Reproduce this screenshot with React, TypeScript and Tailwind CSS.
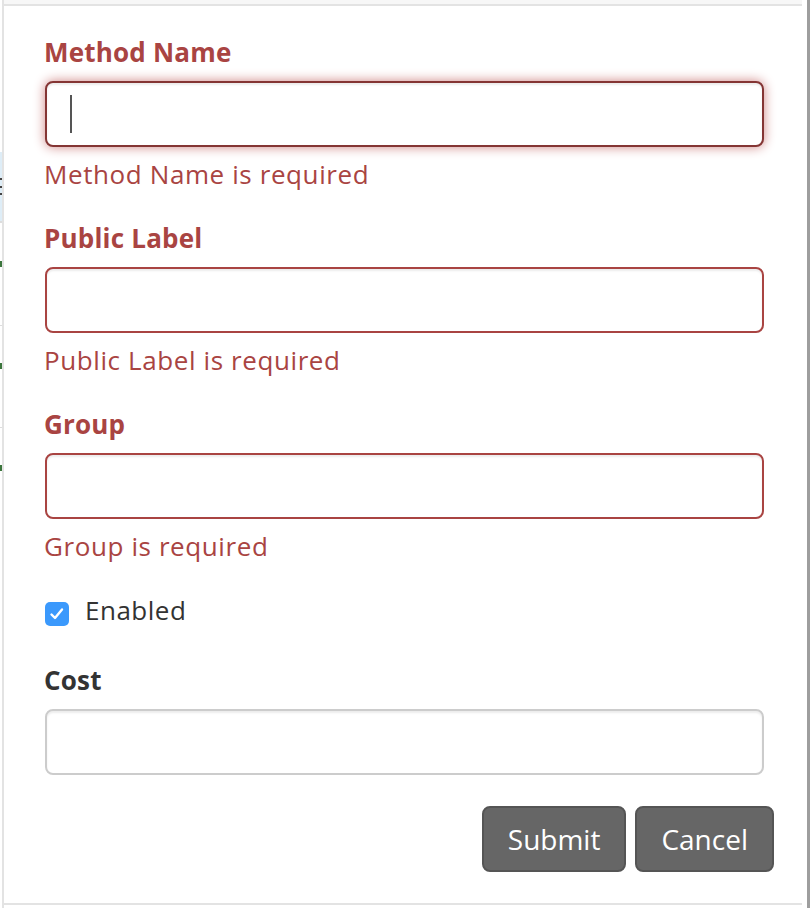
import React from "react"

const errorText = "text-[#a94442]"

function LeftStrip() {
  // sliver of the page underneath the panel
  return (
    <div className="flex w-[2px] flex-col bg-white">
      <div className="h-[152px]" />
      <div className="flex h-[69px] flex-col bg-[#deedf7]">
        <div className="h-[26px]" />
        <div className="h-[2px] bg-[#444]" />
        <div className="h-[6px]" />
        <div className="h-[2px] bg-[#444]" />
        <div className="h-[5px]" />
        <div className="h-[2px] bg-[#444]" />
      </div>
      <div className="h-[2px] bg-[#dddddd]" />
      <div className="h-[38px]" />
      <div className="h-[6px] bg-[#3c763d]" />
      <div className="h-[58px]" />
      <div className="h-[1px] bg-[#dddddd]" />
      <div className="h-[37px]" />
      <div className="h-[6px] bg-[#3c763d]" />
      <div className="h-[58px]" />
      <div className="h-[1px] bg-[#dddddd]" />
      <div className="h-[37px]" />
      <div className="h-[6px] bg-[#3c763d]" />
    </div>
  )
}

function Field({ label, focused }: { label: string; focused?: boolean }) {
  return (
    <div className="mb-[28px] flex flex-col">
      <label className={`text-[26px] font-bold leading-[36px] tracking-[0.2px] ${errorText}`}>
        {label}
      </label>
      <div
        className={`relative ml-[1px] mt-[11px] h-[66px] w-[719px] rounded-[8px] border-2 bg-white ${
          focused
            ? "border-[#843534] shadow-[inset_0_2px_2px_rgba(0,0,0,0.075),0_0_12px_#ce8483]"
            : "border-[#a94442] shadow-[inset_0_2px_2px_rgba(0,0,0,0.075)]"
        }`}
      >
        {/* text caret */}
        {focused && <span className="absolute left-[23px] top-[12px] h-[38px] w-[2px] bg-[#555]" />}
      </div>
      <p className={`mt-[9px] text-[26px] leading-[36px] tracking-[0.6px] ${errorText}`}>
        {label} is required
      </p>
    </div>
  )
}

export default function App() {
  return (
    <div className="flex h-[908px] w-[810px] bg-white font-['Open_Sans',sans-serif]">
      <LeftStrip />
      <div className="w-[2px] bg-[#e3e3e3]" />

      <div className="flex w-[798px] flex-col">
        <div className="h-[4px] bg-[#f7f7f7]" />
        <div className="h-[2px] bg-[#e3e3e3]" />

        <form className="flex flex-1 flex-col pl-[40px] pt-[28px]">
          <Field label="Method Name" focused />
          <Field label="Public Label" />
          <Field label="Group" />

          <div className="flex h-[36px] items-start gap-[16px]">
            <span className="ml-[1px] mt-[10px] flex h-[24px] w-[24px] items-center justify-center rounded-[5px] bg-[#3b99fc]">
              <svg width="24" height="24" viewBox="0 0 24 24" fill="none">
                <path d="M6.5 12.5 L10 16 L17 7.5" stroke="white" strokeWidth="2.4" strokeLinecap="round" strokeLinejoin="round" />
              </svg>
            </span>
            <span className="text-[26px] leading-[36px] tracking-[0.5px] text-[#333]">Enabled</span>
          </div>

          <label className="mt-[34px] text-[26px] font-bold leading-[36px] tracking-[0.2px] text-[#333]">
            Cost
          </label>
          <div className="ml-[1px] mt-[11px] h-[66px] w-[719px] rounded-[8px] border-2 border-[#cccccc] bg-white shadow-[inset_0_2px_2px_rgba(0,0,0,0.075)]" />

          <div className="mt-[31px] flex w-[730px] justify-end gap-[9px]">
            <button type="button" className="h-[66px] rounded-[8px] border-2 border-[#555] bg-[#666] px-[24px] text-[28px] text-white">
              Submit
            </button>
            <button type="button" className="h-[66px] rounded-[8px] border-2 border-[#555] bg-[#666] px-[24px] text-[28px] text-white">
              Cancel
            </button>
          </div>
        </form>

        <div className="h-[2px] bg-[#e3e3e3]" />
        <div className="h-[3px]" />
      </div>

      <div className="w-[5px]" />
      <div className="w-[3px] bg-[#9e9e9e]" />
    </div>
  )
}
